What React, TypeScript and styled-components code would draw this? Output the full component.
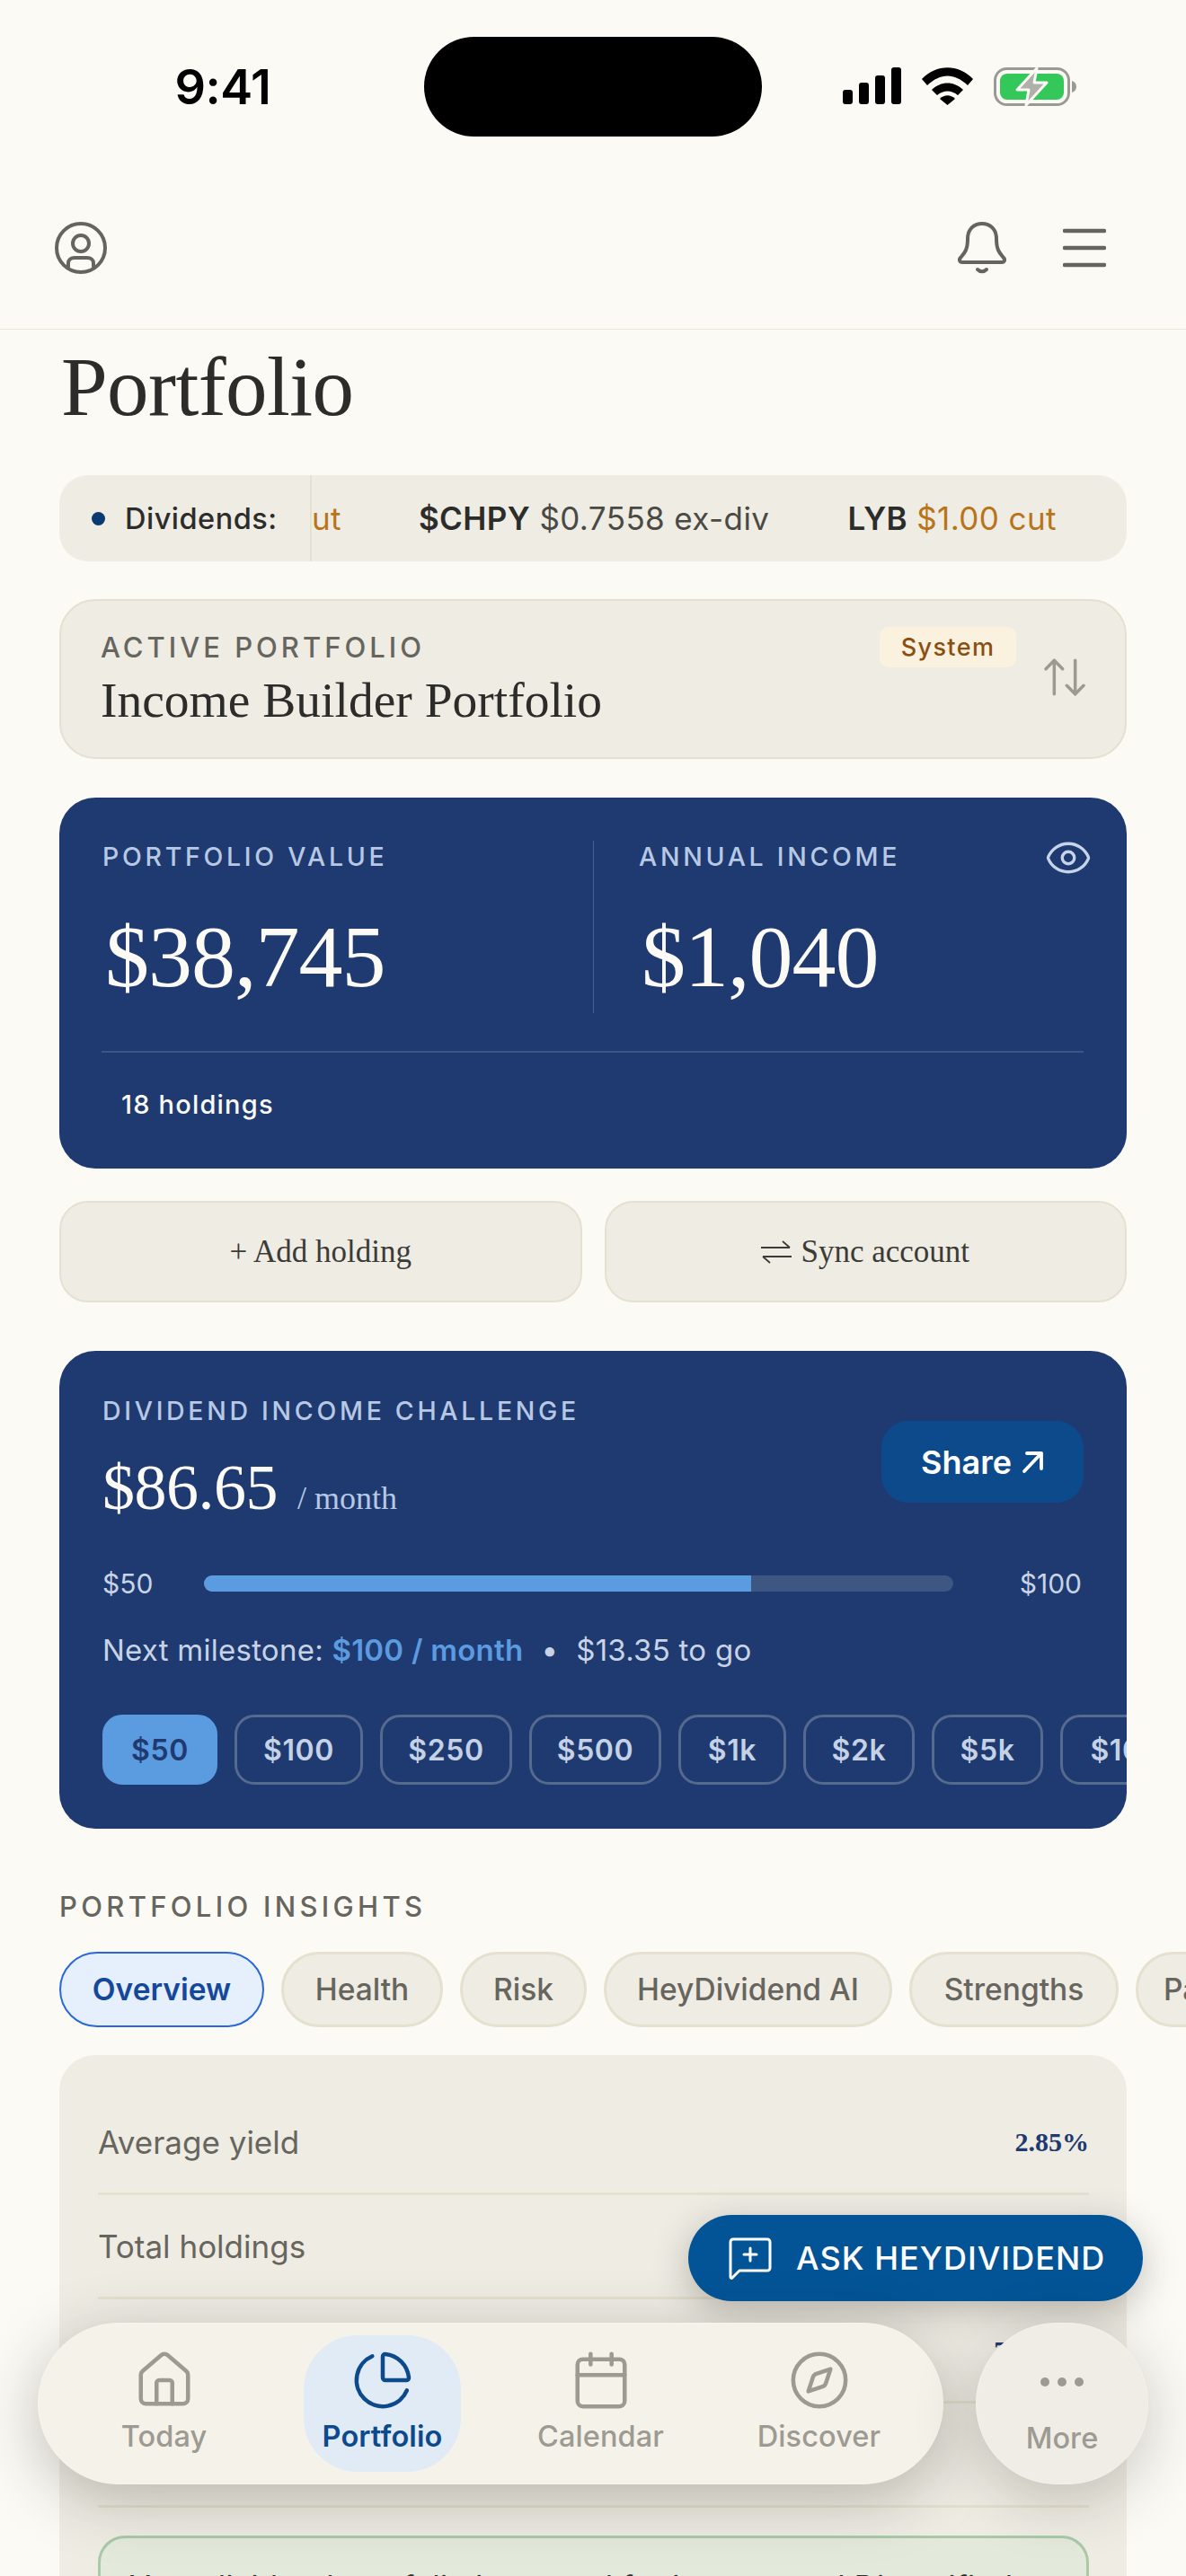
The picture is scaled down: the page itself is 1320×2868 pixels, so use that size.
import React from 'react';
import styled, { createGlobalStyle } from 'styled-components';
import { ArrowUpDown, Calendar, ChartPie, Compass, Eye, House } from 'lucide-react';

const sans = `Inter, 'Liberation Sans', sans-serif`;
const serif = `'Liberation Serif', 'DejaVu Serif', serif`;

const GlobalStyle = createGlobalStyle`
  html, body { margin: 0; padding: 0; background: #fbfaf5; }
  * { box-sizing: border-box; }
`;

const Screen = styled.div`
  position: relative;
  width: 1320px;
  height: 2868px;
  overflow: hidden;
  background: #fbfaf5;
  font-family: ${sans};
`;

const StatusBar = styled.div`
  height: 200px;
  display: grid;
  grid-template-columns: 472px 376px 1fr;
  padding-top: 41px;
`;
const Time = styled.div`
  font-size: 54px;
  font-weight: 600;
  line-height: 111px;
  text-align: center;
  color: #000;
  padding-left: 24px;
  letter-spacing: -0.5px;
`;
const Island = styled.div`
  height: 111px;
  border-radius: 56px;
  background: #000;
`;
const StatusIcons = styled.div`
  display: flex;
  align-items: flex-start;
  gap: 23px;
  padding: 34px 0 0 90px;
`;

const Header = styled.header`
  height: 167px;
  padding: 47px 89px 0 61px;
  border-bottom: 1px solid #e8e4d6;
  display: flex;
  align-items: flex-start;
  justify-content: space-between;
`;
const HeaderRight = styled.div`
  display: flex;
  align-items: flex-start;
  gap: 63px;
`;
const MenuSlot = styled.span`
  margin-top: 6px;
  display: flex;
`;

const Main = styled.main`
  padding: 0 66px;
`;
const Title = styled.h1`
  margin: 12px 0 0 2px;
  font-family: ${serif};
  font-weight: 400;
  font-size: 93px;
  line-height: 104px;
  letter-spacing: -0.6px;
  color: #2c2c2a;
`;

const Ticker = styled.div`
  margin-top: 46px;
  height: 96px;
  border-radius: 32px;
  background: #efece4;
  display: flex;
  align-items: center;
  overflow: hidden;
`;
const TickerLabel = styled.div`
  width: 281px;
  height: 100%;
  flex: none;
  padding-left: 36px;
  display: flex;
  align-items: center;
  gap: 22px;
  border-right: 2px solid #e5e0d0;
  font-size: 32.5px;
  font-weight: 500;
  letter-spacing: 0.5px;
  color: #2c2c2a;
`;
const LiveDot = styled.span`
  width: 15px;
  height: 15px;
  border-radius: 50%;
  background: #0a3a72;
`;
const TickerTrack = styled.div`
  flex: 1;
  display: flex;
  font-size: 35px;
  letter-spacing: 0.4px;
  color: #4a4a45;
  white-space: nowrap;
`;
const TickerItem = styled.span<{ $gap: number }>`
  margin-right: ${({ $gap }) => $gap}px;
`;
const Ticket = styled.b`
  font-weight: 600;
  color: #2c2c2a;
`;
const Cut = styled.span`
  color: #b8741a;
`;

const ActiveCard = styled.section`
  margin-top: 42px;
  height: 178px;
  border-radius: 40px;
  background: #efece4;
  border: 2px solid #e5e0d0;
  padding: 33px 44px 0 44px;
  display: grid;
  grid-template-columns: 1fr auto;
  position: relative;
`;
const Eyebrow = styled.div`
  font-size: 31px;
  font-weight: 500;
  line-height: 38px;
  letter-spacing: 4px;
  color: #66655e;
`;
const ActiveName = styled.div`
  margin-top: 9px;
  font-family: ${serif};
  font-size: 55.5px;
  line-height: 62px;
  color: #2c2c2a;
  white-space: nowrap;
`;
const ActiveSide = styled.div`
  display: flex;
  align-items: flex-start;
  gap: 26px;
  margin: -4px 3px 0 0;
  color: #9d9a92;
`;
const SystemBadge = styled.span`
  height: 45px;
  width: 152px;
  border-radius: 10px;
  background: #faf1df;
  color: #8a4f10;
  font-size: 27px;
  font-weight: 500;
  letter-spacing: 1.4px;
  display: flex;
  align-items: center;
  justify-content: center;
`;
const SwapSlot = styled.span`
  margin: 28px -8px 0 0;
  display: flex;
`;

const ValueCard = styled.section`
  position: relative;
  margin-top: 43px;
  height: 413px;
  border-radius: 40px;
  background: #1f3a70;
  padding: 48px 48px 0 47px;
  color: #fbfaf5;
`;
const ValueRow = styled.div`
  display: grid;
  grid-template-columns: 547px 1fr;
  height: 192px;
`;
const ValueCol = styled.div<{ $divided?: boolean }>`
  padding-left: ${({ $divided }) => ($divided ? '50px' : '1px')};
  border-left: ${({ $divided }) => ($divided ? '1px solid #48608a' : 'none')};
`;
const ValueLabel = styled.div`
  font-size: 28.5px;
  font-weight: 500;
  line-height: 36px;
  letter-spacing: 3.7px;
  color: #b7c8e4;
  white-space: nowrap;
`;
const BigValue = styled.div`
  margin-top: 38px;
  font-family: ${serif};
  font-size: 98px;
  line-height: 110px;
  letter-spacing: -1px;
  color: #fbfaf5;
  padding-left: 3px;
`;
const EyeSlot = styled.span`
  position: absolute;
  right: 38px;
  top: 40px;
  color: #c6d3e8;
  display: flex;
`;
const ValueFoot = styled.div`
  margin-top: 42px;
  padding: 40px 0 0 22px;
  border-top: 2px solid #3d5682;
  font-size: 29px;
  font-weight: 500;
  line-height: 36px;
  letter-spacing: 1.2px;
  color: #fbfaf5;
`;

const ActionRow = styled.div`
  margin-top: 36px;
  display: grid;
  grid-template-columns: 1fr 1fr;
  gap: 25px;
`;
const ActionButton = styled.button`
  height: 113px;
  border-radius: 32px;
  background: #efece4;
  border: 2px solid #e5e0d0;
  font-family: ${serif};
  font-size: 35px;
  color: #3b3b37;
  padding: 0;
  display: flex;
  align-items: center;
  justify-content: center;
  gap: 10px;
`;
const SwapGlyph = styled.svg`
  width: 34px;
  height: 26px;
  flex: none;
`;

const ChallengeCard = styled.section`
  margin-top: 54px;
  height: 532px;
  border-radius: 40px;
  background: #1f3a70;
  padding: 49px 0 0 48px;
  overflow: hidden;
  position: relative;
  color: #c8d3e6;
`;
const ChallengeTop = styled.div`
  display: flex;
  justify-content: space-between;
  padding-right: 48px;
`;
const ChallengeLabel = styled(ValueLabel)`
  letter-spacing: 3.7px;
`;
const IncomeLine = styled.div`
  margin-top: 22px;
  display: flex;
  align-items: baseline;
  gap: 22px;
  font-family: ${serif};
`;
const IncomeValue = styled.span`
  font-size: 72px;
  line-height: 90px;
  color: #fbfaf5;
  letter-spacing: -0.5px;
`;
const IncomeUnit = styled.span`
  font-size: 36px;
  color: #b7c8e4;
`;
const ShareButton = styled.button`
  margin-top: 29px;
  width: 225px;
  height: 91px;
  flex: none;
  border: none;
  border-radius: 30px;
  background: #0d4a8c;
  color: #fff;
  font-family: ${sans};
  font-size: 36px;
  font-weight: 600;
  display: flex;
  align-items: center;
  justify-content: center;
  gap: 10px;
  padding: 0;
`;
const Progress = styled.div`
  margin-top: 44px;
  padding-right: 50px;
  display: grid;
  grid-template-columns: 113px 834px 1fr;
  align-items: center;
  font-size: 30px;
  line-height: 36px;
`;
const ProgressEnd = styled.span`
  text-align: right;
`;
const Track = styled.div`
  height: 18px;
  border-radius: 9px;
  background: #3d5682;
  overflow: hidden;
`;
const Fill = styled.div`
  height: 100%;
  background: #5b9be0;
`;
const Milestone = styled.div`
  margin-top: 36px;
  font-size: 33px;
  line-height: 40px;
  letter-spacing: 0.25px;
  white-space: nowrap;
`;
const MilestoneAccent = styled.b`
  font-weight: 600;
  color: #5b9be0;
`;
const MilestoneDot = styled.span`
  margin: 0 20px;
`;
const ChipRow = styled.div`
  margin-top: 52px;
  display: flex;
  gap: 19px;
`;
const Chip = styled.span<{ $active?: boolean; $w: number }>`
  flex: none;
  width: ${({ $w }) => $w}px;
  height: 78px;
  border-radius: 22px;
  border: 3px solid ${({ $active }) => ($active ? '#5b9be0' : '#56698f')};
  background: ${({ $active }) => ($active ? '#5b9be0' : 'transparent')};
  color: ${({ $active }) => ($active ? '#1f3a70' : '#c5d2e6')};
  font-size: 32px;
  font-weight: 600;
  letter-spacing: 0.6px;
  display: flex;
  align-items: center;
  justify-content: center;
  white-space: nowrap;
`;

const InsightsTitle = styled.h2`
  margin: 67px 0 0 0;
  font-size: 31px;
  font-weight: 500;
  line-height: 40px;
  letter-spacing: 4.3px;
  color: #66655e;
`;
const PillRow = styled.div`
  margin-top: 30px;
  display: flex;
  gap: 19px;
  width: 1254px;
`;
const Pill = styled.span<{ $active?: boolean; $w: number }>`
  flex: none;
  width: ${({ $w }) => $w}px;
  height: 84px;
  border-radius: 42px;
  border: ${({ $active }) => ($active ? '2px solid #2a67d8' : '3px solid #e5e0d0')};
  background: ${({ $active }) => ($active ? '#e6effc' : '#efece4')};
  color: ${({ $active }) => ($active ? '#15489b' : '#66655e')};
  font-size: 33.5px;
  font-weight: ${({ $active }) => ($active ? 600 : 500)};
  display: flex;
  align-items: center;
  justify-content: center;
  white-space: nowrap;
`;
const InsightsCard = styled.section`
  margin-top: 31px;
  border-radius: 40px;
  background: #efece4;
  padding: 40px 42px 60px 43px;
  height: 700px;
`;
const MetricRow = styled.div`
  height: 116px;
  border-bottom: 3px solid #e5e0d0;
  display: flex;
  align-items: center;
  justify-content: space-between;
  font-size: 35px;
  color: #66655e;
`;
const MetricValue = styled.span`
  font-family: ${serif};
  font-size: 30px;
  font-weight: 700;
  color: #1f3a70;
`;
const InsightNote = styled.div`
  margin-top: 31px;
  border: 3px solid #a9c9a9;
  border-radius: 30px;
  background: #e3eadb;
  padding: 30px 32px;
  font-size: 35px;
  line-height: 48px;
  color: #2c2c2a;
  white-space: nowrap;
  overflow: hidden;
`;

const AskButton = styled.button`
  position: absolute;
  left: 766px;
  top: 2466px;
  width: 506px;
  height: 96px;
  border: none;
  border-radius: 48px;
  background: #035496;
  color: #fff;
  font-family: ${sans};
  font-size: 36px;
  font-weight: 500;
  letter-spacing: 1.05px;
  box-shadow: 0 10px 40px rgba(40, 36, 24, 0.28);
  display: flex;
  align-items: center;
  gap: 27px;
  padding: 0 0 0 45px;
  white-space: nowrap;
`;
const NavBar = styled.nav`
  position: absolute;
  left: 42px;
  top: 2586px;
  width: 1008px;
  height: 180px;
  border-radius: 90px;
  background: #f5f2ea;
  border: 1px solid #f7f5ee;
  box-shadow: 0 16px 70px rgba(40, 36, 24, 0.28);
  display: grid;
  grid-template-columns: repeat(4, 243px);
  padding: 13px 18px;
`;
const MoreButton = styled.div`
  position: absolute;
  left: 1086px;
  top: 2586px;
  width: 192px;
  height: 180px;
  border-radius: 90px;
  background: #efede6;
  border: 1px solid #f4f2ec;
  box-shadow: 0 16px 70px rgba(40, 36, 24, 0.24);
  display: flex;
  flex-direction: column;
  align-items: center;
`;
const NavCell = styled.div`
  display: flex;
  justify-content: center;
`;
const NavItem = styled.div<{ $active?: boolean }>`
  width: 175px;
  height: 152px;
  border-radius: 60px;
  background: ${({ $active }) => ($active ? '#e1ebf6' : 'transparent')};
  color: ${({ $active }) => ($active ? '#0d4a8c' : '#9d9a92')};
  font-weight: ${({ $active }) => ($active ? 600 : 500)};
  display: flex;
  flex-direction: column;
  align-items: center;
  padding-top: 15px;
  font-size: 32.5px;
`;
const NavLabel = styled.span`
  line-height: 38px;
  margin-top: 9px;
  letter-spacing: 0.1px;
`;
const MoreDots = styled.svg`
  margin-top: 59px;
  width: 50px;
  height: 12px;
  color: #9d9a92;
`;
const MoreLabel = styled(NavLabel)`
  margin-top: 38px;
  font-size: 32.5px;
  font-weight: 500;
  color: #9d9a92;
`;

const Signal = () => (
  <svg width="65" height="41" viewBox="0 0 65 41" fill="#000">
    <rect x="0" y="25" width="11" height="16" rx="3" />
    <rect x="18" y="17" width="11" height="24" rx="3" />
    <rect x="36" y="9" width="11" height="32" rx="3" />
    <rect x="54" y="0" width="11" height="41" rx="3" />
  </svg>
);

const Wifi = () => (
  <svg width="57" height="42" viewBox="0 0 57 42" fill="#000">
    <path d="M0 13C16-4 41-4 57 13l-6 7C36 6 21 6 6 20Z" />
    <path d="M11 25c10-10 25-10 35 0l-6 6c-7-6-16-6-23 0Z" />
    <path d="M20 35c5-5 12-5 17 0l-8.500 7Z" />
  </svg>
);

const Battery = () => (
  <svg width="93" height="43" viewBox="0 0 93 43">
    <rect x="1.500" y="1.500" width="82" height="40" rx="13" fill="none" stroke="#999996" strokeWidth="3" />
    <rect x="7" y="7" width="71" height="29" rx="8" fill="#34c759" />
    <path d="M87 15c3 1 5 3 5 6.500S90 27 87 28Z" fill="#999996" />
    <path d="M48 1 26 25h13l-3 17 23-25H45Z" fill="#b0afaa" stroke="#fbfaf5" strokeWidth="3" strokeLinejoin="round" />
  </svg>
);

const ProfileIcon = () => (
  <svg width="58" height="58" viewBox="0 0 58 58" fill="none" stroke="#66645e" strokeWidth="4">
    <circle cx="29" cy="29" r="27" />
    <circle cx="29" cy="24" r="9" />
    <path d="M15 50v-4c0-4 3-6 7-6h14c4 0 7 2 7 6v4" strokeLinecap="round" />
  </svg>
);

const BellIcon = () => (
  <svg width="54" height="58" viewBox="0 0 54 58" fill="none" stroke="#66645e" strokeWidth="4" strokeLinecap="round" strokeLinejoin="round">
    <path d="M3 40c-2 2-1 5 2 5h44c3 0 4-3 2-5-4-5-8-8-8-21C43 8 36 2 27 2S11 8 11 19c0 13-4 16-8 21Z" />
    <path d="M22 53c3 3 7 3 10 0" />
  </svg>
);

const MenuIcon = () => (
  <svg width="48" height="46" viewBox="0 0 48 46" stroke="#66645e" strokeWidth="4.500" strokeLinecap="round">
    <path d="M2 4h44M2 23h44M2 42h44" />
  </svg>
);

const ChatPlus = () => (
  <svg width="48" height="47" viewBox="0 0 48 47" fill="none" stroke="#fff" strokeWidth="3" strokeLinecap="round" strokeLinejoin="round" style={{ flex: 'none' }}>
    <path d="M2 5a3 3 0 0 1 3-3h38a3 3 0 0 1 3 3v29a3 3 0 0 1-3 3H12l-8 8c-1 1-2 0-2-1Z" />
    <path d="M24 12v14M17 19h14" />
  </svg>
);

const SwapArrows = () => (
  <SwapGlyph viewBox="0 0 34 26" fill="none" stroke="#3b3b37" strokeWidth="1.800">
    <path d="M0 8h32M24 1l8 7" />
    <path d="M34 18H2M10 25l-8-7" />
  </SwapGlyph>
);

const ShareArrow = () => (
  <svg width="26" height="26" viewBox="0 0 26 26" fill="none" stroke="#fff" strokeWidth="3.800" strokeLinecap="round" strokeLinejoin="round">
    <path d="M4 23 23 3M7 3h16v17" />
  </svg>
);

const amounts = [
  { label: '$50', w: 128, active: true },
  { label: '$100', w: 143 },
  { label: '$250', w: 147 },
  { label: '$500', w: 147 },
  { label: '$1k', w: 120 },
  { label: '$2k', w: 124 },
  { label: '$5k', w: 124 },
  { label: '$10k', w: 143 }
];

const tabs = [
  { label: 'Overview', w: 228, active: true },
  { label: 'Health', w: 180 },
  { label: 'Risk', w: 141 },
  { label: 'HeyDividend AI', w: 321 },
  { label: 'Strengths', w: 233 },
  { label: 'Payouts', w: 190 }
];

const navItems = [
  { label: 'Today', Icon: House },
  { label: 'Portfolio', Icon: ChartPie, active: true },
  { label: 'Calendar', Icon: Calendar },
  { label: 'Discover', Icon: Compass }
];

export default function App() {
  return (
    <Screen>
      <GlobalStyle />
      <StatusBar>
        <Time>9:41</Time>
        <Island />
        <StatusIcons>
          <Signal />
          <Wifi />
          <Battery />
        </StatusIcons>
      </StatusBar>
      <Header>
        <ProfileIcon />
        <HeaderRight>
          <BellIcon />
          <MenuSlot>
            <MenuIcon />
          </MenuSlot>
        </HeaderRight>
      </Header>
      <Main>
        <Title>Portfolio</Title>
        <Ticker>
          <TickerLabel>
            <LiveDot />
            Dividends:
          </TickerLabel>
          <TickerTrack>
            <TickerItem $gap={86}>
              <Cut>ut</Cut>
            </TickerItem>
            <TickerItem $gap={87}>
              <Ticket>$CHPY</Ticket> $0.7558 ex-div
            </TickerItem>
            <TickerItem $gap={0}>
              <Ticket>LYB</Ticket> <Cut>$1.00 cut</Cut>
            </TickerItem>
          </TickerTrack>
        </Ticker>

        <ActiveCard>
          <div>
            <Eyebrow>ACTIVE PORTFOLIO</Eyebrow>
            <ActiveName>Income Builder Portfolio</ActiveName>
          </div>
          <ActiveSide>
            <SystemBadge>System</SystemBadge>
            <SwapSlot>
              <ArrowUpDown size={56} strokeWidth={1.5} />
            </SwapSlot>
          </ActiveSide>
        </ActiveCard>

        <ValueCard>
          <EyeSlot>
            <Eye size={54} strokeWidth={1.5} />
          </EyeSlot>
          <ValueRow>
            <ValueCol>
              <ValueLabel>PORTFOLIO VALUE</ValueLabel>
              <BigValue>$38,745</BigValue>
            </ValueCol>
            <ValueCol $divided>
              <ValueLabel>ANNUAL INCOME</ValueLabel>
              <BigValue>$1,040</BigValue>
            </ValueCol>
          </ValueRow>
          <ValueFoot>18 holdings</ValueFoot>
        </ValueCard>

        <ActionRow>
          <ActionButton>+ Add holding</ActionButton>
          <ActionButton>
            <SwapArrows />
            Sync account
          </ActionButton>
        </ActionRow>

        <ChallengeCard>
          <ChallengeTop>
            <div>
              <ChallengeLabel>DIVIDEND INCOME CHALLENGE</ChallengeLabel>
              <IncomeLine>
                <IncomeValue>$86.65</IncomeValue>
                <IncomeUnit>/ month</IncomeUnit>
              </IncomeLine>
            </div>
            <ShareButton>
              Share <ShareArrow />
            </ShareButton>
          </ChallengeTop>
          <Progress>
            <span>$50</span>
            <Track>
              <Fill style={{ width: '73%' }} />
            </Track>
            <ProgressEnd>$100</ProgressEnd>
          </Progress>
          <Milestone>
            Next milestone: <MilestoneAccent>$100 / month</MilestoneAccent>
            <MilestoneDot>•</MilestoneDot>$13.35 to go
          </Milestone>
          <ChipRow>
            {amounts.map(a => (
              <Chip key={a.label} $active={a.active} $w={a.w}>
                {a.label}
              </Chip>
            ))}
          </ChipRow>
        </ChallengeCard>

        <InsightsTitle>PORTFOLIO INSIGHTS</InsightsTitle>
        <PillRow>
          {tabs.map(t => (
            <Pill key={t.label} $active={t.active} $w={t.w}>
              {t.label}
            </Pill>
          ))}
        </PillRow>
        <InsightsCard>
          <MetricRow>
            Average yield
            <MetricValue>2.85%</MetricValue>
          </MetricRow>
          <MetricRow>
            Total holdings
            <MetricValue>18</MetricValue>
          </MetricRow>
          <MetricRow>
            Monthly income
            <MetricValue>7.40 / 10</MetricValue>
          </MetricRow>
          <MetricRow>
            Annual income
            <MetricValue>$1,040</MetricValue>
          </MetricRow>
          <InsightNote>Your dividend portfolio is geared for income and Diversified</InsightNote>
        </InsightsCard>
      </Main>

      <AskButton>
        <ChatPlus />
        ASK HEYDIVIDEND
      </AskButton>
      <NavBar>
        {navItems.map(({ label, Icon, active }) => (
          <NavCell key={label}>
            <NavItem $active={active}>
              <Icon size={70} strokeWidth={1.55} />
              <NavLabel>{label}</NavLabel>
            </NavItem>
          </NavCell>
        ))}
      </NavBar>
      <MoreButton>
        <MoreDots viewBox="0 0 50 12" fill="currentColor">
          <circle cx="6" cy="6" r="5" />
          <circle cx="25" cy="6" r="5" />
          <circle cx="44" cy="6" r="5" />
        </MoreDots>
        <MoreLabel>More</MoreLabel>
      </MoreButton>
    </Screen>
  );
}
